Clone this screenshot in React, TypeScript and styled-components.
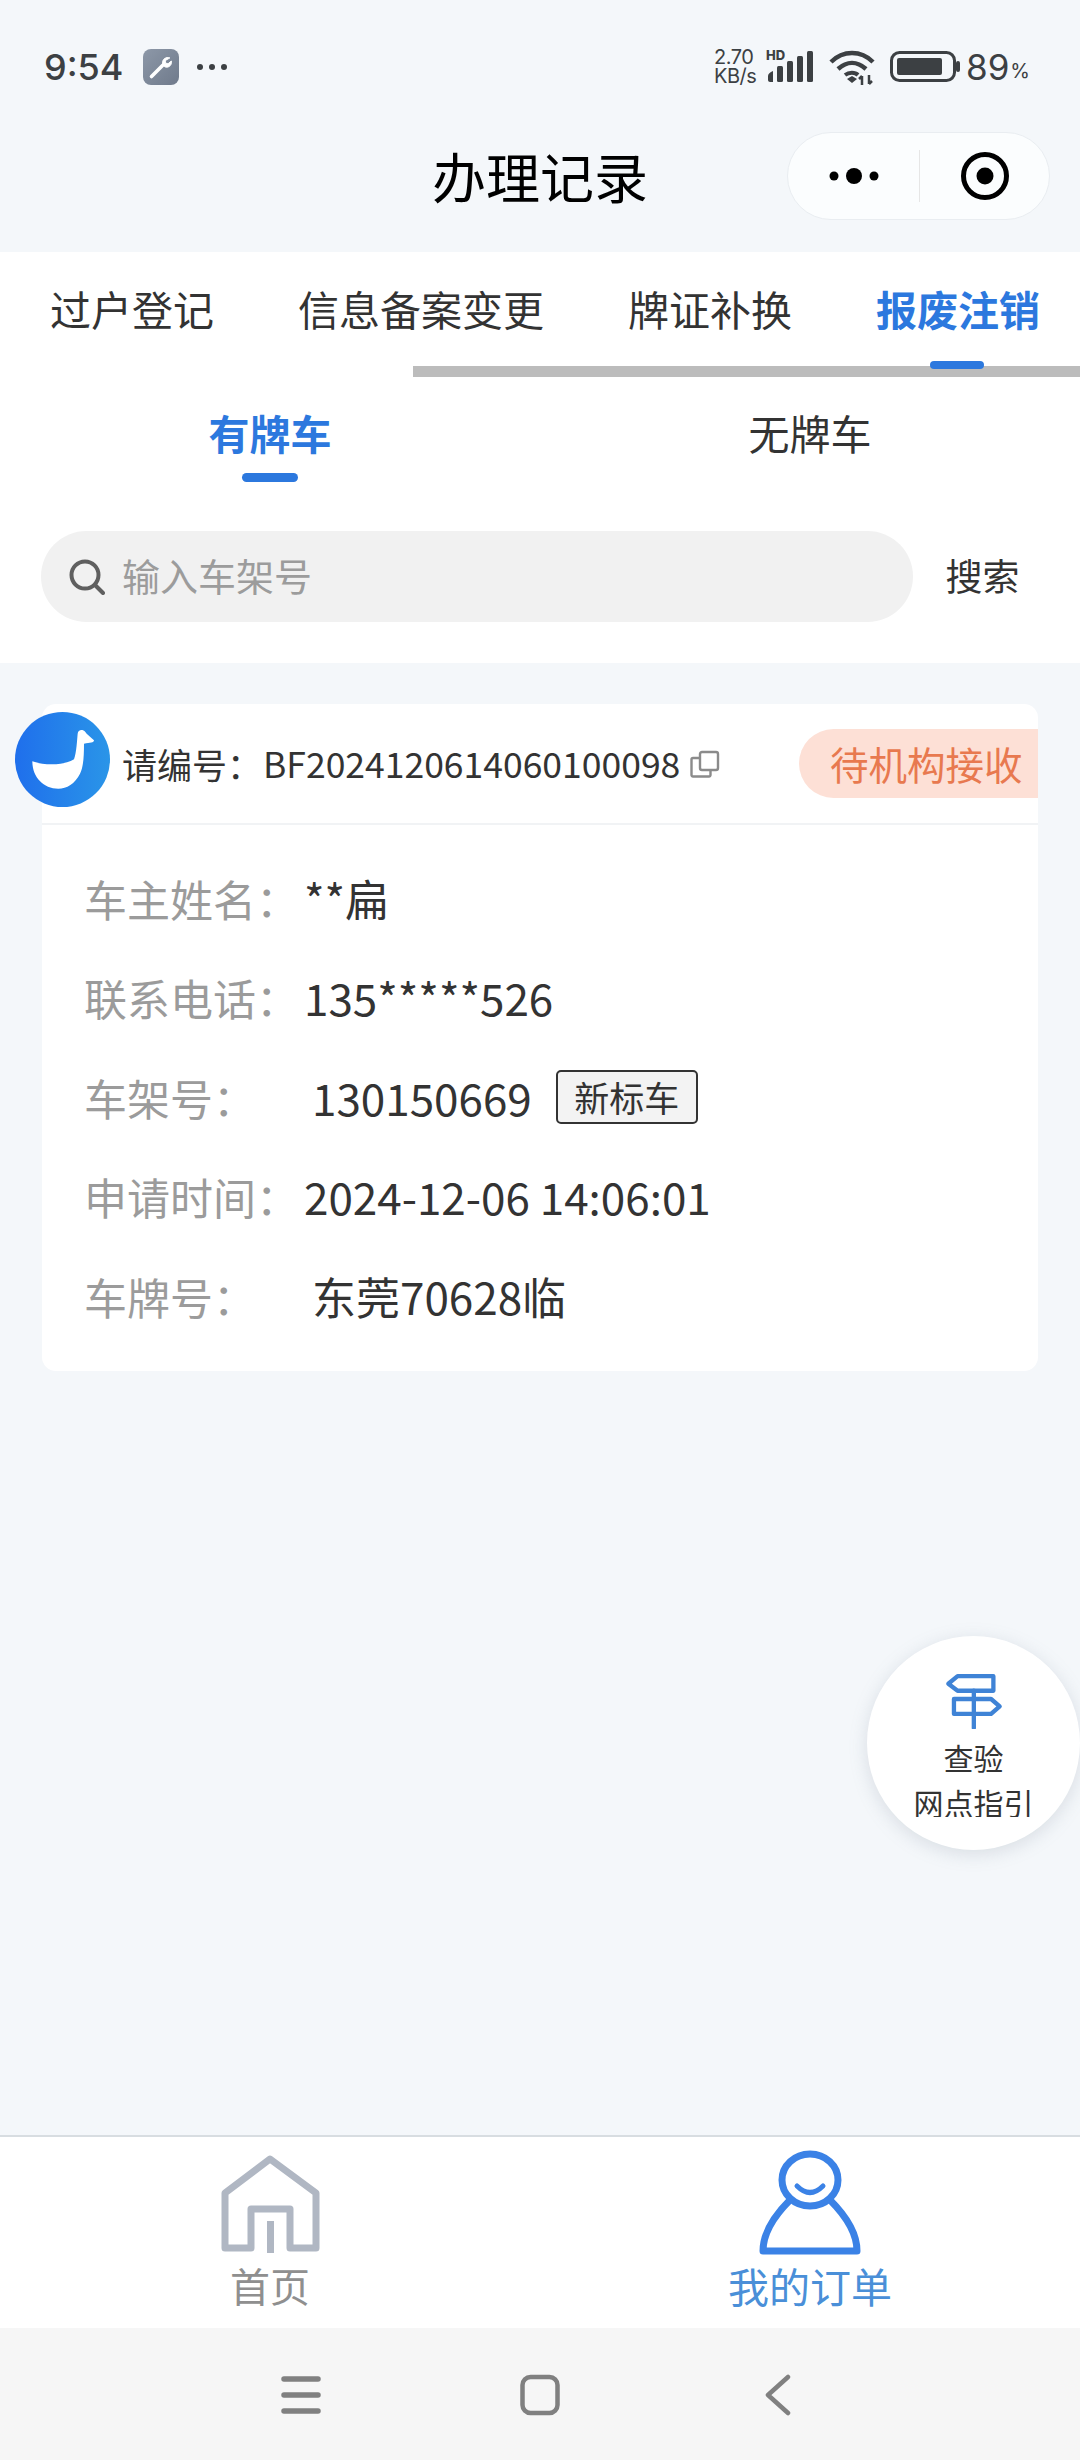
import React from "react";
import styled, { createGlobalStyle } from "styled-components";

const GlobalStyle = createGlobalStyle`
  html, body {
    margin: 0;
    padding: 0;
    background: #f4f7fa;
  }
  * {
    box-sizing: border-box;
  }
`;

const cjk = `"Noto Sans CJK SC", "Noto Sans", sans-serif`;

const Page = styled.div`
  position: relative;
  width: 1080px;
  height: 2460px;
  overflow: hidden;
  display: flex;
  flex-direction: column;
  background: #f4f7fa;
  font-family: ${cjk};
  color: #333;
`;

const StatusBar = styled.div`
  height: 132px;
  padding: 2px 50px 0 44px;
  display: flex;
  align-items: center;
  font-family: Inter, "Noto Sans", sans-serif;
  color: #3c4043;
`;

const Time = styled.span`
  font-size: 36px;
  font-weight: 500;
  line-height: 1;
`;

const AppTile = styled.div`
  width: 36px;
  height: 36px;
  margin-left: 20px;
  border-radius: 8px;
  background: linear-gradient(135deg, #8d98a8, #6f7a8b);
  display: flex;
  align-items: center;
  justify-content: center;
`;

const MoreDots = styled.span`
  display: flex;
  gap: 6px;
  margin-left: 18px;
  i {
    width: 6px;
    height: 6px;
    border-radius: 50%;
    background: #3c4043;
  }
`;

const StatusRight = styled.div`
  margin-left: auto;
  display: flex;
  align-items: center;
`;

const NetSpeed = styled.div`
  width: 46px;
  font-size: 20px;
  letter-spacing: -0.5px;
  line-height: 19px;
  white-space: nowrap;
`;

const SignalBox = styled.div`
  position: relative;
  width: 50px;
  height: 34px;
  margin-left: 6px;
  svg {
    display: block;
  }
`;

const HdMark = styled.span`
  position: absolute;
  left: 0;
  top: -2px;
  font-size: 13px;
  font-weight: 800;
  line-height: 14px;
`;

const WifiIcon = styled.svg`
  width: 46px;
  height: 36px;
  margin-left: 13px;
`;

const BatteryIcon = styled.svg`
  width: 70px;
  height: 32px;
  margin-left: 15px;
`;

const BatteryText = styled.span`
  margin-left: 6px;
  font-size: 35px;
  line-height: 1;
  font-weight: 400;
`;

const BatteryPercent = styled.span`
  margin-left: 1px;
  margin-top: 8px;
  font-size: 20px;
  line-height: 1;
`;

const NavBar = styled.div`
  height: 120px;
  display: grid;
  grid-template-columns: 1fr auto 1fr;
  align-items: start;
`;

const NavTitle = styled.div`
  grid-column: 2;
  height: 88px;
  line-height: 88px;
  font-size: 54px;
  color: #000;
`;

const Capsule = styled.div`
  grid-column: 3;
  justify-self: end;
  margin-right: 30px;
  width: 263px;
  height: 88px;
  border-radius: 44px;
  border: 1px solid #e9edf1;
  background: #fbfdfe;
  display: grid;
  grid-template-columns: 131px 1px 1fr;
  align-items: center;
  justify-items: center;
`;

const CapsuleDivider = styled.div`
  width: 1px;
  height: 52px;
  background: #e6e6e6;
`;

const TopPanel = styled.div`
  background: #fff;
  height: 411px;
`;

const TabRow = styled.div`
  position: relative;
  height: 132px;
  display: flex;
  gap: 84px;
  padding: 31px 0 0 50px;
`;

const TabItem = styled.div<{ $active?: boolean }>`
  position: relative;
  height: 50px;
  line-height: 50px;
  font-size: 41px;
  white-space: nowrap;
  font-weight: ${(p) => (p.$active ? 700 : 400)};
  color: ${(p) => (p.$active ? "#2c78de" : "#333")};
  ${(p) =>
    p.$active &&
    `
    &::after {
      content: "";
      position: absolute;
      z-index: 2;
      left: 54px;
      top: 78px;
      width: 54px;
      height: 8px;
      border-radius: 4px;
      background: #2c78de;
    }
  `}
`;

const ScrollThumb = styled.div`
  position: absolute;
  right: 0;
  top: 114px;
  width: 667px;
  height: 11px;
  background: #bcbcbc;
`;

const SubTabs = styled.div`
  height: 147px;
  display: grid;
  grid-template-columns: 1fr 1fr;
`;

const SubTab = styled.div<{ $active?: boolean }>`
  position: relative;
  padding-top: 23px;
  text-align: center;
  font-size: 41px;
  line-height: 50px;
  font-weight: ${(p) => (p.$active ? 700 : 400)};
  color: ${(p) => (p.$active ? "#2c78de" : "#333")};
  ${(p) =>
    p.$active &&
    `
    &::after {
      content: "";
      position: absolute;
      left: 50%;
      top: 89px;
      width: 56px;
      height: 9px;
      margin-left: -28px;
      border-radius: 5px;
      background: #2c78de;
    }
  `}
`;

const SearchRow = styled.div`
  display: flex;
  align-items: center;
  padding-left: 41px;
`;

const SearchBox = styled.div`
  width: 872px;
  height: 91px;
  border-radius: 46px;
  background: #f1f1f1;
  padding-left: 28px;
  display: flex;
  align-items: center;
  gap: 17px;
  font-size: 38px;
  color: #9c9c9c;
`;

const Placeholder = styled.span`
  margin-bottom: 5px;
`;

const SearchButton = styled.div`
  flex: 1;
  padding-right: 28px;
  margin-bottom: 3px;
  text-align: center;
  font-size: 37px;
  color: #333;
`;

const Card = styled.div`
  position: relative;
  margin: 41px 42px 0;
  height: 667px;
  border-radius: 14px;
  background: #fff;
`;

const Logo = styled.svg`
  position: absolute;
  left: -27px;
  top: 8px;
  width: 95px;
  height: 95px;
`;

const CardHead = styled.div`
  height: 121px;
  padding-left: 80px;
  display: flex;
  align-items: center;
  border-bottom: 2px solid #f1f3f5;
  font-size: 35px;
  color: #333;
`;

const OrderNo = styled.span`
  margin-left: 1px;
  margin-bottom: 2px;
  font-size: 35.5px;
`;

const CopyIcon = styled.svg`
  width: 30px;
  height: 28px;
  margin-left: 10px;
`;

const StatusBadge = styled.div`
  margin-left: auto;
  width: 239px;
  height: 69px;
  padding-left: 31px;
  border-radius: 35px 0 0 35px;
  background: #fde0d6;
  color: #e8794f;
  font-size: 38.5px;
  line-height: 69px;
  white-space: nowrap;
`;

const CardBody = styled.div`
  padding: 23px 0 0 42px;
`;

const Row = styled.div`
  height: 99.5px;
  display: flex;
  align-items: center;
`;

const RowLabel = styled.span`
  width: 220px;
  flex: none;
  font-size: 43px;
  color: #9b9b9b;
`;

const RowValue = styled.span<{ $indent?: boolean }>`
  margin-left: ${(p) => (p.$indent ? "8px" : "0")};
  font-size: 44px;
  color: #333;
  white-space: nowrap;
`;

const VehicleTag = styled.span`
  margin-left: 24px;
  width: 142px;
  height: 54px;
  border: 2px solid #333;
  border-radius: 5px;
  background: #f3f3f3;
  font-size: 35px;
  line-height: 50px;
  text-align: center;
  color: #333;
`;

const GuideFab = styled.div`
  position: absolute;
  right: 0;
  top: 1636px;
  width: 213px;
  height: 214px;
  border-radius: 50%;
  background: #fff;
  box-shadow: 0 4px 18px rgba(120, 130, 150, 0.22);
  display: flex;
  flex-direction: column;
  align-items: center;
  padding-top: 37px;
`;

const GuideText = styled.div`
  margin-top: 6px;
  height: 82px;
  overflow: hidden;
  font-size: 30px;
  line-height: 45px;
  text-align: center;
  color: #333;
  white-space: nowrap;
`;

const BottomBar = styled.div`
  margin-top: auto;
  height: 193px;
  border-top: 2px solid #d8dde1;
  background: #fff;
  display: grid;
  grid-template-columns: 1fr 1fr;
`;

const BottomItem = styled.div<{ $active?: boolean }>`
  display: flex;
  flex-direction: column;
  align-items: center;
  font-size: ${(p) => (p.$active ? "41px" : "40px")};
  line-height: 50px;
  color: ${(p) => (p.$active ? "#4a8fd8" : "#8f8f8f")};
`;

const BottomIcon = styled.svg<{ $top: number; $gap: number }>`
  display: block;
  margin-top: ${(p) => p.$top}px;
  margin-bottom: ${(p) => p.$gap}px;
`;

const SystemNav = styled.div`
  height: 132px;
  background: #f6f6f6;
  display: flex;
  align-items: flex-start;
  justify-content: center;
  padding-top: 46px;
  svg {
    width: 40px;
    height: 42px;
    margin: 0 99.5px;
  }
`;

export default function App() {
  return (
    <Page>
      <GlobalStyle />
      <StatusBar>
        <Time>9:54</Time>
        <AppTile>
          <svg width="26" height="26" viewBox="0 0 26 26" fill="none" stroke="#fff" strokeLinecap="round">
            <path d="M3.500 22.500L14.500 11.500" strokeWidth="3.600" />
            <path d="M21.500 3.800c-3.500-1.200-7 1.300-7 5 0 2 1.300 3.700 3 4.300 3.700.8 6.800-2.600 5.800-6.100l-3.300 2.800-2.200-.6-.6-2.200z" fill="#fff" strokeWidth="1" />
          </svg>
        </AppTile>
        <MoreDots>
          <i />
          <i />
          <i />
        </MoreDots>
        <StatusRight>
          <NetSpeed>
            2.70
            <br />
            KB/s
          </NetSpeed>
          <SignalBox>
            <HdMark>HD</HdMark>
            <svg width="50" height="34" viewBox="0 0 50 34" fill="#3c4043">
              <path d="M2 26c0-2 2-4 5-5v11H4c-1 0-2-1-2-2z" />
              <rect x="11" y="16" width="6" height="16" rx="1.5" />
              <rect x="21" y="11" width="6" height="21" rx="1.5" />
              <rect x="31" y="6" width="6" height="26" rx="1.5" />
              <rect x="41" y="1" width="6" height="31" rx="1.5" />
            </svg>
          </SignalBox>
          <WifiIcon viewBox="0 0 46 36" fill="none" stroke="#3c4043">
            <path d="M2 13C14 1 32 1 44 13" strokeWidth="4.5" />
            <path d="M9 20c9-8 19-8 28 0" strokeWidth="4.5" />
            <path d="M16 26c4-3 10-3 13 0" strokeWidth="4" />
            <path d="M18 30l5-3 5 3-5 4z" fill="#3c4043" stroke="none" />
            <path d="M33 36v-9m-3 3l3-3M40 26v9m3-3l-3 3" strokeWidth="2.5" />
          </WifiIcon>
          <BatteryIcon viewBox="0 0 70 32" fill="none">
            <rect x="1.5" y="1.5" width="63" height="28" rx="8" stroke="#3c4043" strokeWidth="3" />
            <rect x="7" y="7" width="45" height="17" rx="2" fill="#3c4043" />
            <rect x="66" y="10" width="4" height="11" rx="2" fill="#3c4043" />
          </BatteryIcon>
          <BatteryText>89</BatteryText>
          <BatteryPercent>%</BatteryPercent>
        </StatusRight>
      </StatusBar>

      <NavBar>
        <NavTitle>办理记录</NavTitle>
        <Capsule>
          <svg width="50" height="20" viewBox="0 0 50 20" fill="#000">
            <circle cx="5" cy="10" r="4.5" />
            <circle cx="25" cy="10" r="8" />
            <circle cx="45" cy="10" r="4.5" />
          </svg>
          <CapsuleDivider />
          <svg width="50" height="50" viewBox="0 0 50 50">
            <circle cx="25" cy="25" r="21.5" fill="none" stroke="#000" strokeWidth="5" />
            <circle cx="25" cy="25" r="8.5" fill="#000" />
          </svg>
        </Capsule>
      </NavBar>

      <TopPanel>
        <TabRow>
          <TabItem>过户登记</TabItem>
          <TabItem>信息备案变更</TabItem>
          <TabItem>牌证补换</TabItem>
          <TabItem $active>报废注销</TabItem>
          <ScrollThumb />
        </TabRow>
        <SubTabs>
          <SubTab $active>有牌车</SubTab>
          <SubTab>无牌车</SubTab>
        </SubTabs>
        <SearchRow>
          <SearchBox>
            <svg width="36" height="36" viewBox="0 0 36 36" fill="none" stroke="#5f5f5f" strokeWidth="4">
              <circle cx="16" cy="16" r="13.5" />
              <path d="M26 26l8 8" strokeLinecap="round" />
            </svg>
            <Placeholder>输入车架号</Placeholder>
          </SearchBox>
          <SearchButton>搜索</SearchButton>
        </SearchRow>
      </TopPanel>

      <Card>
        <Logo viewBox="45 65 285 285">
          <defs>
            <linearGradient id="logoFill" x1="0" y1="0" x2="1" y2="0">
              <stop offset="0" stopColor="#1f6fec" />
              <stop offset="1" stopColor="#2a95e8" />
            </linearGradient>
          </defs>
          <circle cx="187.5" cy="207.5" r="142.500" fill="url(#logoFill)" />
          <path
            d="M97 213C125 224 190 228 222 207C230 185 231 150 233 130C234 118 248 115 256 125C260 132 270 138 282 150C282 157 270 158 252 160C252 200 250 230 240 250C225 280 200 295 175 295C130 295 97 260 97 213Z"
            fill="#fff"
          />
        </Logo>
        <CardHead>
          请编号：<OrderNo>BF2024120614060100098</OrderNo>
          <CopyIcon viewBox="0 0 30 28" fill="none" stroke="#8b8b8b" strokeWidth="2.4">
            <rect x="10" y="2" width="18" height="18" rx="2" />
            <path d="M10 8H3a1.500 1.500 0 0 0-1.500 1.500V25a1.500 1.500 0 0 0 1.500 1.500h16a1.500 1.500 0 0 0 1.500-1.500v-5" />
          </CopyIcon>
          <StatusBadge>待机构接收</StatusBadge>
        </CardHead>
        <CardBody>
          <Row>
            <RowLabel>车主姓名：</RowLabel>
            <RowValue>**扁</RowValue>
          </Row>
          <Row>
            <RowLabel>联系电话：</RowLabel>
            <RowValue>135*****526</RowValue>
          </Row>
          <Row>
            <RowLabel>车架号：</RowLabel>
            <RowValue $indent>130150669</RowValue>
            <VehicleTag>新标车</VehicleTag>
          </Row>
          <Row>
            <RowLabel>申请时间：</RowLabel>
            <RowValue>2024-12-06 14:06:01</RowValue>
          </Row>
          <Row>
            <RowLabel>车牌号：</RowLabel>
            <RowValue $indent>东莞70628临</RowValue>
          </Row>
        </CardBody>
      </Card>

      <GuideFab>
        <svg width="58" height="56" viewBox="375 160 175 168" fill="none" stroke="#3f83d6" strokeWidth="13">
          <path d="M385 192l28-23h108v44H413z" strokeLinejoin="round" />
          <path d="M402 238h112l26 22-26 23H402z" strokeLinejoin="round" />
          <path d="M462 213v112" strokeLinecap="round" />
        </svg>
        <GuideText>
          查验
          <br />
          网点指引
        </GuideText>
      </GuideFab>

      <BottomBar>
        <BottomItem>
          <BottomIcon $top={18} $gap={5} width="99" height="100" viewBox="0 0 99 100" fill="none" stroke="#b0b7c3" strokeWidth="7" strokeLinejoin="round">
            <path d="M4 93V38L49 4l46 34v55H69V54H30v39z" />
            <path d="M49.500 66v32" />
          </BottomIcon>
          首页
        </BottomItem>
        <BottomItem $active>
          <BottomIcon $top={13} $gap={5} width="102" height="105" viewBox="0 0 102 105" fill="none" stroke="#3b82e6" strokeWidth="7">
            <ellipse cx="51" cy="30" rx="28" ry="26" />
            <path d="M38 36q13 13 26 0" strokeWidth="5" strokeLinecap="round" />
            <path d="M31 50C15 66 4 84 4 101h94c0-17-11-35-27-51" strokeLinejoin="round" />
          </BottomIcon>
          我的订单
        </BottomItem>
      </BottomBar>

      <SystemNav>
        <svg viewBox="0 0 40 42" fill="none" stroke="#808080" strokeWidth="5.500" strokeLinecap="round">
          <path d="M3 5h34M3 21h34M3 37h34" />
        </svg>
        <svg viewBox="0 0 40 42" fill="none" stroke="#808080" strokeWidth="4.500">
          <rect x="2.500" y="3" width="35" height="36" rx="8" />
        </svg>
        <svg viewBox="0 0 40 42" fill="none" stroke="#808080" strokeWidth="4.500" strokeLinecap="round" strokeLinejoin="round">
          <path d="M29 3L9 21l20 18" />
        </svg>
      </SystemNav>
    </Page>
  );
}
